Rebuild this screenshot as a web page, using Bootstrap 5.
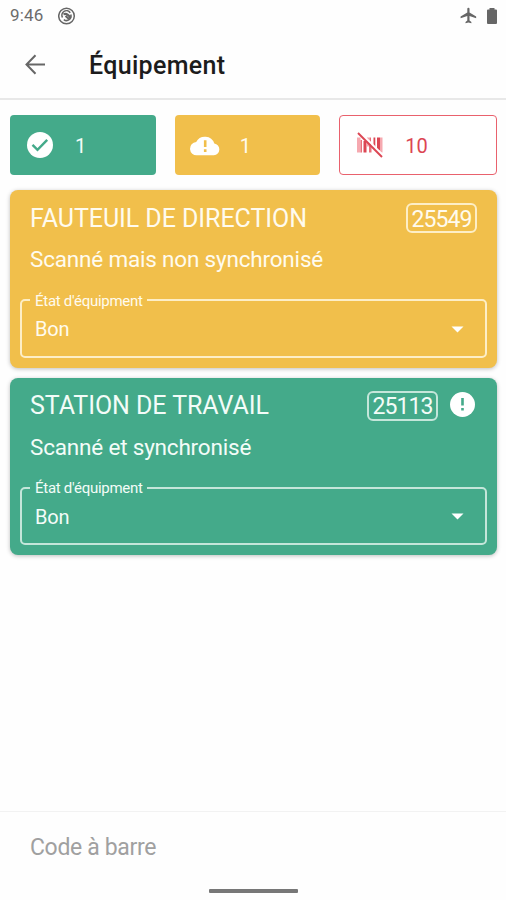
<!DOCTYPE html>
<html lang="fr">
<head>
<meta charset="utf-8">
<meta name="viewport" content="width=device-width, initial-scale=1">
<title>Équipement</title>
<link href="https://cdn.jsdelivr.net/npm/bootstrap@5.3.0/dist/css/bootstrap.min.css" rel="stylesheet">
<style>
  body { font-family: Roboto, "Liberation Sans", sans-serif; background: #fefefe; height: 900px; line-height: 1; }
  svg { display: block; flex: none; }
  .status { height: 31px; padding: 0 6px 0 10px; color: #6c6c6c; font-size: 17px; letter-spacing: .2px; }
  .clock { margin-right: 14px; }
  .battery { margin-left: 7px; }
  .appbar { height: 69px; padding: 0 24px; border-bottom: 2px solid #e8e8e8; }
  .appbar h1 { font-size: 25px; font-weight: 500; color: #1c1c1c; letter-spacing: .32px; margin-left: 43px; padding-top: 3px; }
  .counts { padding: 15px 9px 0 10px; gap: 19px; font-size: 20px; }
  .count { width: 146px; height: 60px; border-radius: 4px; padding-left: 13px; }
  .count span { margin-left: 18px; padding-top: 1px; }
  .count-missing { width: 158px; border: 1.5px solid #e9616d; color: #dc4653; background: #fff; }
  .green { background: #44aa8a; color: #f3fcf8; --line: #c4e6da; }
  .yellow { background: #f1bf4b; color: #fffbee; --line: #fdeec6; }
  .items { padding: 15px 9px 0 10px; gap: 10px; }
  .item { height: 177.500px; border-radius: 8px; padding: 12px 10px 0; box-shadow: 0 1px 4px rgba(0,0,0,.26); }
  .item-head { height: 32px; padding: 0 10px; }
  .item-name { font-size: 25px; letter-spacing: -.06px; }
  .tag { height: 30px; width: 71px; border: 2px solid var(--line); border-radius: 6px; font-size: 23px; letter-spacing: -.9px; padding-top: 2px; }
  .item-state { font-size: 22.500px; letter-spacing: -.19px; padding: 14px 10px 0; height: 57.500px; }
  .field { height: 66px; border: 2px solid var(--line); border-radius: 5px; padding: 0 21px 0 13px; }
  .field legend { float: none; width: auto; margin: 0 0 0 -5px; padding: 1px 4px 0 5px; font-size: 15px; line-height: 16px; letter-spacing: -.27px; }
  .field-value { font-size: 20px; height: 41px; letter-spacing: -.2px; }
  .scan { height: 89px; border-top: 1px solid #f2f2f2; padding: 24px 30px 0; }
  .scan-input { font-size: 23px; color: #a0a0a0; line-height: 24px; letter-spacing: -.35px; }
  .home-bar { width: 89px; height: 4px; background: #777; border-radius: 1px; margin-top: 29px; }
</style>
</head>
<body class="d-flex flex-column overflow-hidden">
  <div class="status d-flex align-items-center">
    <span class="clock">9:46</span>
    <svg width="18" height="18" viewBox="0 0 18 18" fill="none" stroke="#666"><circle cx="8.500" cy="9" r="7.800" stroke-width="1.500"/><path d="M4.500 10.500a4.500 4.500 0 0 1 7.700-4.700M12.800 7.600a4.500 4.500 0 0 1-7 5" stroke-width="1.500"/><path d="M5.500 7.200q4-1.500 7 3.800M7.500 9l3.500 3" stroke-width="2"/></svg>
    <svg class="ms-auto" width="17" height="18" viewBox="2 2 20 20" fill="#666"><path d="M21 14.500v-2L13.200 8V3.500a1.300 1.300 0 0 0-2.600 0V8L2.700 12.500v2l7.900-2.400v5.200L8.500 19v1.500l3.400-1 3.500 1V19l-2.200-1.700v-5.200z"/></svg>
    <svg class="battery" width="16" height="18" viewBox="0 0 16 18" fill="#666"><path d="M5.500 1h5v1.500h1.500q1 0 1 1V16q0 1-1 1H4q-1 0-1-1V3.500q0-1 1-1h1.500z"/></svg>
  </div>
  <header class="appbar d-flex align-items-center">
    <svg width="22" height="22" viewBox="0 0 22 22" fill="none" stroke="#666" stroke-width="2"><path d="M21 10.500H3M11.500 1.300L2.500 10.500l9 9.200"/></svg>
    <h1 class="mb-0">Équipement</h1>
  </header>
  <div class="counts d-flex">
    <div class="count green d-flex align-items-center">
      <svg width="34" height="34" viewBox="0 0 34 34"><circle cx="17" cy="17" r="13" fill="#fff"/><path d="M9.500 16.800l5 5 9.700-10" fill="none" stroke="#44aa8a" stroke-width="2.400"/></svg>
      <span>1</span>
    </div>
    <div class="count yellow d-flex align-items-center">
      <svg width="34" height="34" viewBox="0 0 34 34"><path d="M9 27.300a6.600 6.600 0 0 1-.8-13.200A9.800 9.800 0 0 1 26.300 15.400a6 6 0 0 1-.4 11.900z" fill="#fff"/><path d="M15.900 12.300h2.600v6.800h-2.600zM15.900 21.300h2.600v2.600h-2.600z" fill="#f1bf4b"/></svg>
      <span>1</span>
    </div>
    <div class="count count-missing d-flex align-items-center">
      <svg width="34" height="34" viewBox="0 0 34 34"><path fill="#f6a9b0" d="M4 9.500h3.500v15H4zM14 9.500h2.500v9H14zM27 9.500h2.500v15H27z"/><path fill="#e9707b" d="M7.500 12H9v12.500H7.500zM16.500 9.500H18v9h-1.500zM16 18h2.500v6.500H16z"/><path fill="#dc4653" d="M10.500 13h3v11.500h-3zM20.500 9.500h1.800v11h-1.800zM24 9.500h3v13h-3z"/><path d="M6.500 3.800l24 24" stroke="#fff" stroke-width="2"/><path d="M5 5l24 24" stroke="#dc4653" stroke-width="2"/></svg>
      <span>10</span>
    </div>
  </div>
  <main class="items d-flex flex-column">
    <article class="item yellow">
      <div class="item-head d-flex align-items-center">
        <span class="item-name me-auto">FAUTEUIL DE DIRECTION</span>
        <span class="tag d-flex align-items-center justify-content-center">25549</span>
      </div>
      <div class="item-state">Scanné mais non synchronisé</div>
      <fieldset class="field">
        <legend>État d'équipment</legend>
        <div class="field-value d-flex align-items-center justify-content-between">Bon
          <svg width="13" height="7" viewBox="0 0 13 7" fill="#fff"><path d="M.5.500h12l-6 6z"/></svg>
        </div>
      </fieldset>
    </article>
    <article class="item green">
      <div class="item-head d-flex align-items-center">
        <span class="item-name me-auto">STATION DE TRAVAIL</span>
        <span class="tag d-flex align-items-center justify-content-center">25113</span>
        <svg class="ms-2" width="31" height="31" viewBox="0 0 31 31"><circle cx="16.500" cy="14.500" r="12.500" fill="#fff"/><path d="M15.200 8h2.600v7.500h-2.600zM15.200 18h2.600v2.500h-2.600z" fill="#44aa8a"/></svg>
      </div>
      <div class="item-state">Scanné et synchronisé</div>
      <fieldset class="field">
        <legend>État d'équipment</legend>
        <div class="field-value d-flex align-items-center justify-content-between">Bon
          <svg width="13" height="7" viewBox="0 0 13 7" fill="#fff"><path d="M.5.500h12l-6 6z"/></svg>
        </div>
      </fieldset>
    </article>
  </main>
  <footer class="scan mt-auto">
    <div class="scan-input">Code à barre</div>
    <div class="home-bar mx-auto"></div>
  </footer>
<script src="https://cdn.jsdelivr.net/npm/bootstrap@5.3.0/dist/js/bootstrap.bundle.min.js"></script>
</body>
</html>
